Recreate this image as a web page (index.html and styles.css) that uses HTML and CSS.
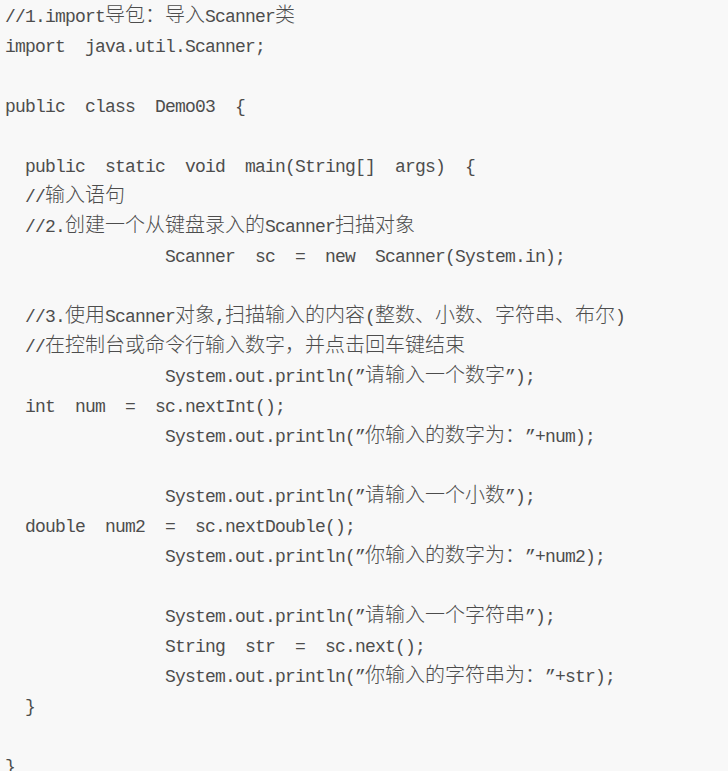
FILE: index.html
```html
<!DOCTYPE html>
<html lang="zh">
<head>
<meta charset="utf-8">
<title>Demo03</title>
<link rel="stylesheet" href="styles.css">
</head>
<body>
<pre class="code">//1.import<span class="zh">导包：导入</span>Scanner<span class="zh">类</span>
import  java.util.Scanner;

public  class  Demo03  {

  public  static  void  main(String[]  args)  {
  //<span class="zh">输入语句</span>
  //2.<span class="zh">创建一个从键盘录入的</span>Scanner<span class="zh">扫描对象</span>
                Scanner  sc  =  new  Scanner(System.in);

  //3.<span class="zh">使用</span>Scanner<span class="zh">对象</span>,<span class="zh">扫描输入的内容</span>(<span class="zh">整数、小数、字符串、布尔</span>)
  //<span class="zh">在控制台或命令行输入数字，并点击回车键结束</span>
                System.out.println(”<span class="zh">请输入一个数字</span>”);
  int  num  =  sc.nextInt();
                System.out.println(”<span class="zh">你输入的数字为：</span>”+num);

                System.out.println(”<span class="zh">请输入一个小数</span>”);
  double  num2  =  sc.nextDouble();
                System.out.println(”<span class="zh">你输入的数字为：</span>”+num2);

                System.out.println(”<span class="zh">请输入一个字符串</span>”);
                String  str  =  sc.next();
                System.out.println(”<span class="zh">你输入的字符串为：</span>”+str);
  }

}</pre>
</body>
</html>
```
FILE: styles.css
```css
html, body {
  margin: 0;
  padding: 0;
  background: #f8f8f8;
}

.code {
  margin: 0;
  padding: 2px 0 0 5px;
  font-family: "Liberation Mono", "Noto Sans CJK SC", monospace;
  font-size: 18px;
  letter-spacing: -0.8px;
  line-height: 30px;
  color: #4d4d4d;
  white-space: pre;
  text-spacing-trim: space-all;
}

.zh {
  font-family: "Noto Sans CJK SC", sans-serif;
  font-size: 20px;
  font-weight: 300;
  letter-spacing: 0;
  line-height: 20px;
}
```
